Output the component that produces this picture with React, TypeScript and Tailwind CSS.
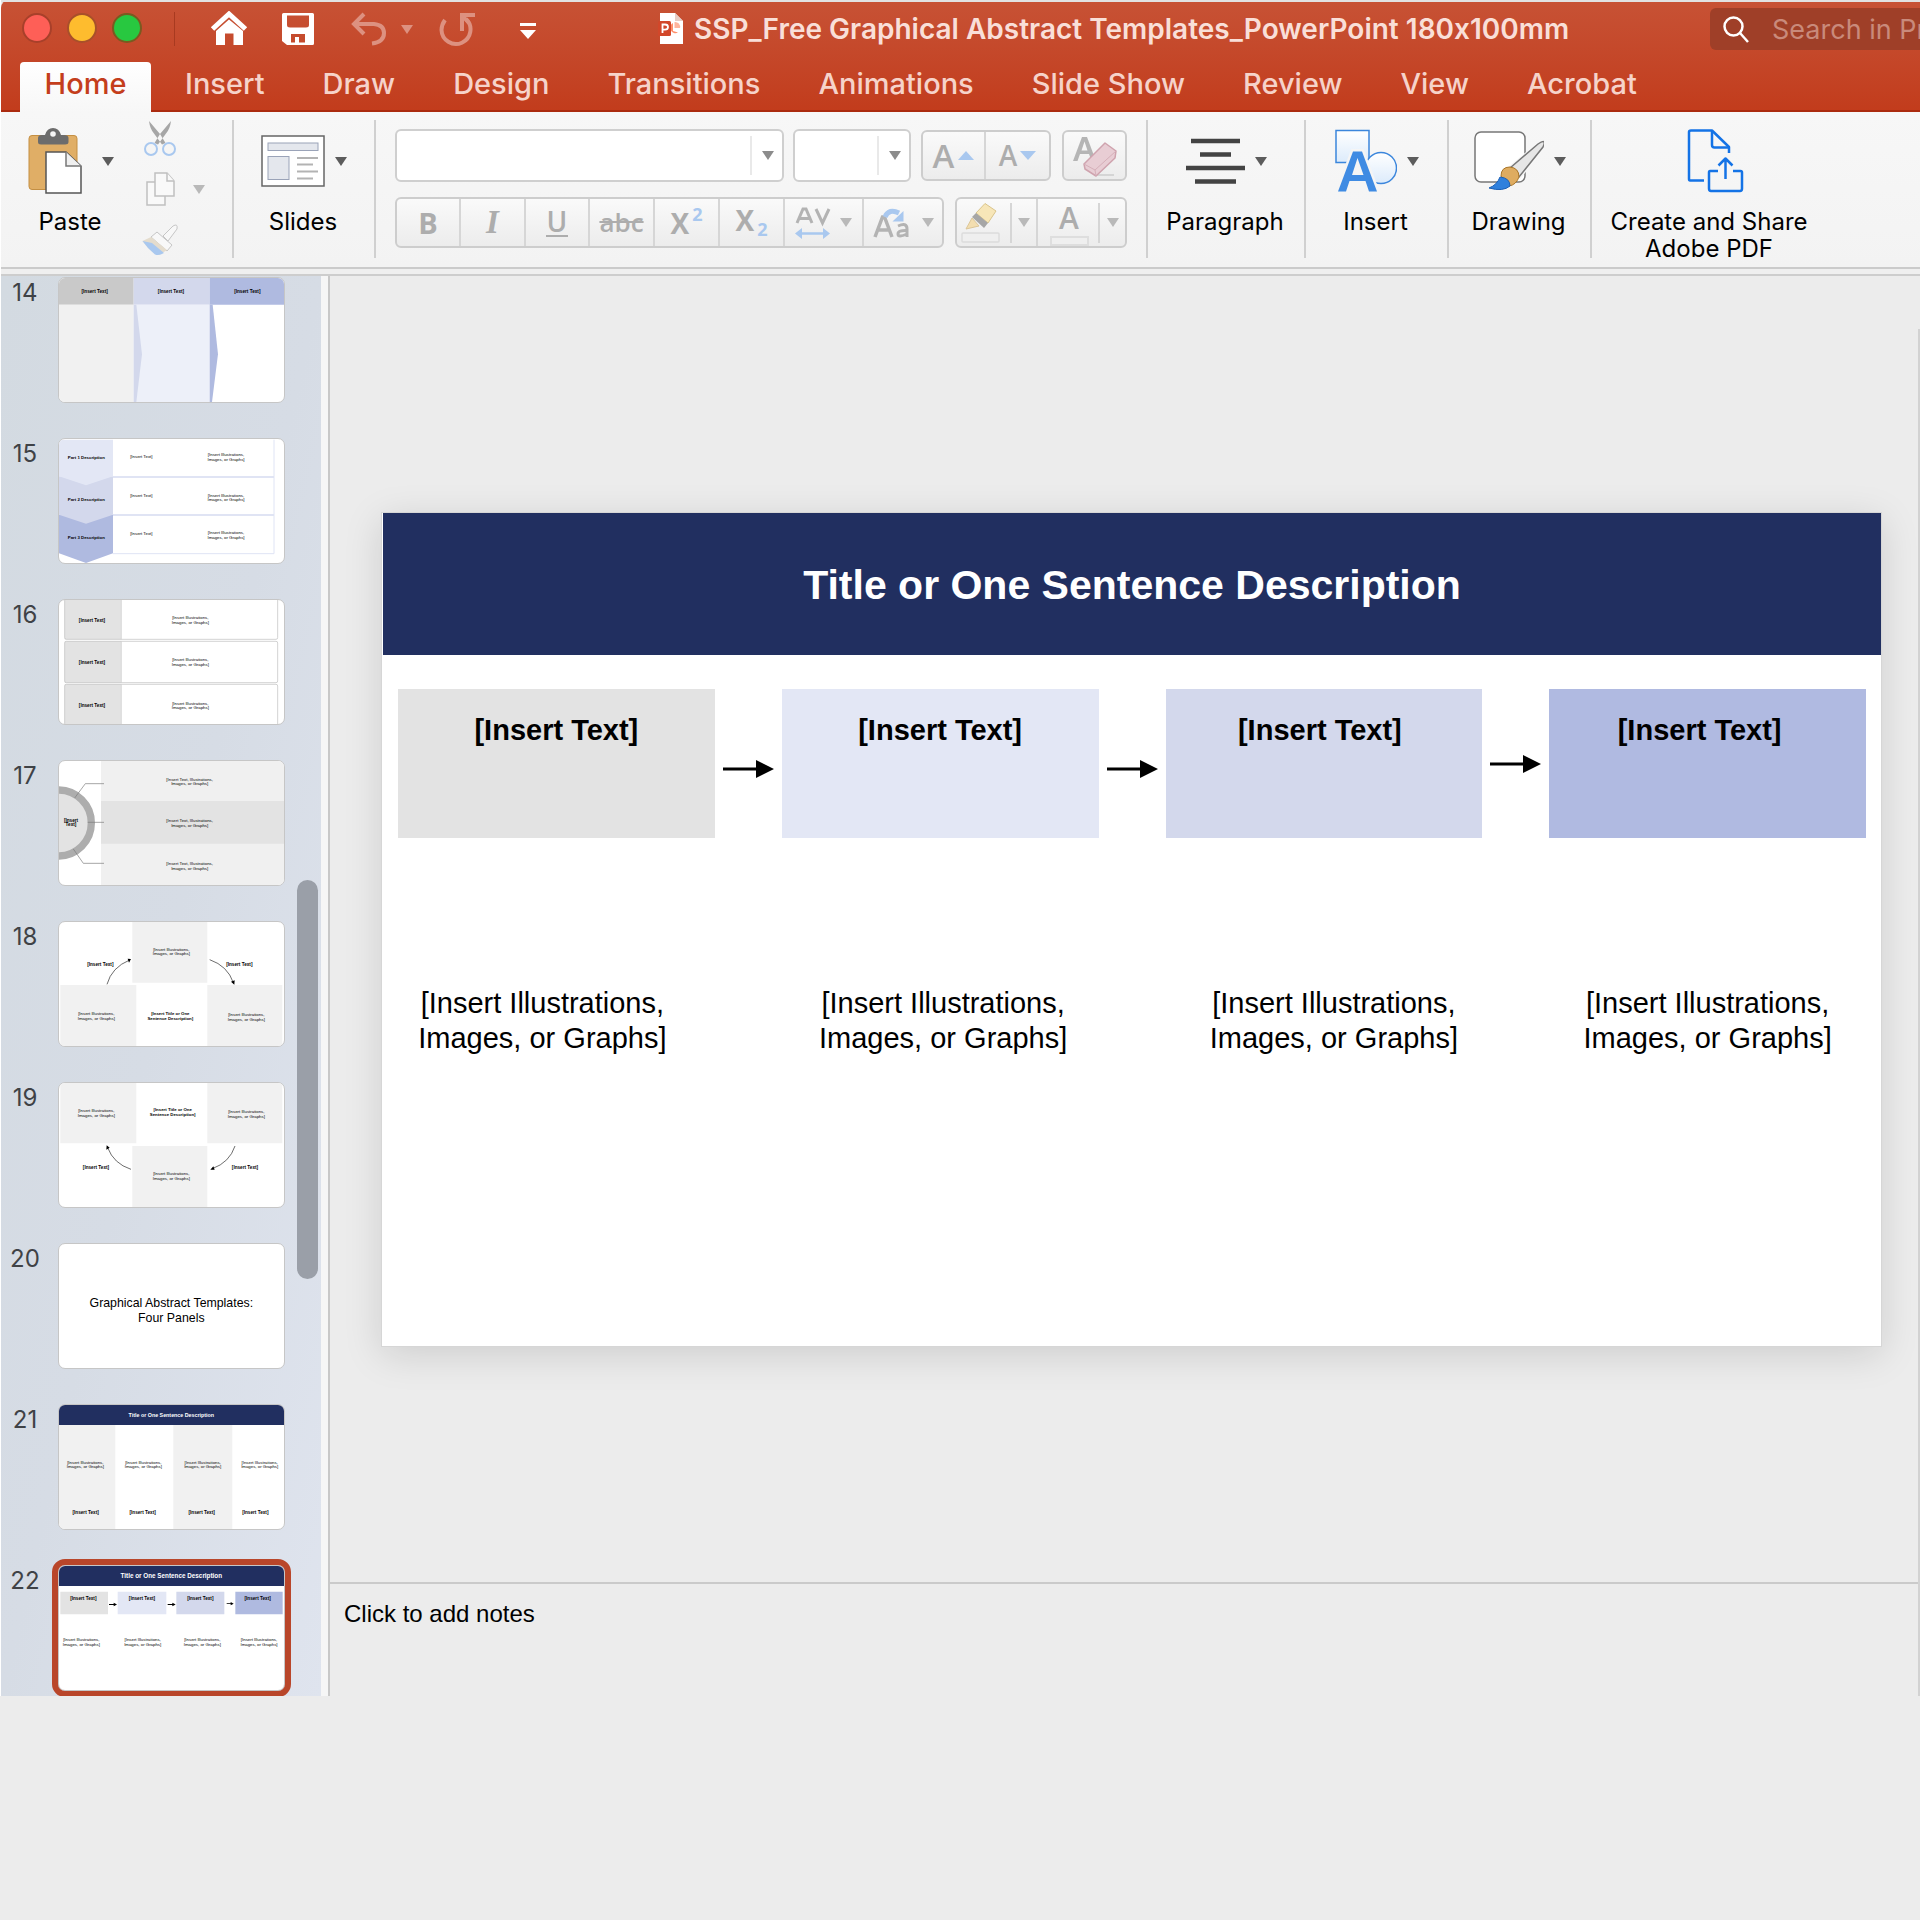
import React from "react";

type Align = { children?: React.ReactNode };

/* ---------- small shared pieces ---------- */

function Caret({ tone = "#5c5c5c" }: { tone?: string }) {
  return (
    <svg width="12" height="9" viewBox="0 0 12 9" aria-hidden="true" className="shrink-0">
      <path d="M0 0H12L6 9Z" fill={tone} />
    </svg>
  );
}

function Separator() {
  return <div className="mt-[8px] h-[138px] w-[2px] shrink-0 bg-[#d0d0d0]" />;
}

/* ---------- title bar ---------- */

function TitleBar() {
  return (
    <div className="flex h-[60px] items-start">
      <div className="flex w-[657px] shrink-0 items-start">
        <div className="flex gap-[15px] pt-[11px] pl-[21px]">
          <button aria-label="Close" className="size-[30px] rounded-full border-2 border-[#a8402a] bg-[#fe5f57]" />
          <button aria-label="Minimize" className="size-[30px] rounded-full border-2 border-[#a8502a] bg-[#febc2e]" />
          <button aria-label="Zoom" className="size-[30px] rounded-full border-2 border-[#7a5a20] bg-[#28c840]" />
        </div>
        <div className="mt-[10px] ml-[32px] h-[34px] w-px bg-[#a83a20]" />
        <button aria-label="Home" className="mt-[9px] ml-[35px]">
          <svg width="38" height="36" viewBox="210 11 38 36">
            <path d="M212.500 29L229 14L245.500 29" fill="none" stroke="#fff" strokeWidth="5" />
            <path d="M216 31L229 19.500L243 31V45H233.500V33.500H225V45H216Z" fill="#fff" />
          </svg>
        </button>
        <button aria-label="Save" className="mt-[11px] ml-[34px]">
          <svg width="32" height="33" viewBox="282 13 32 33">
            <path fillRule="evenodd" fill="#fff" d="M283.500 13H312.500Q314 13 314 14.500V43.500Q314 45 312.500 45H287L282 41V14.500Q282 13 283.500 13ZM287 15.500V25Q287 27.500 290 27.500H306Q309 27.500 309 25V15.500ZM291 34V42.500H295V37H299V42.500H305V34Z" />
          </svg>
        </button>
        <button aria-label="Undo" className="mt-[10px] ml-[37px]">
          <svg width="36" height="34" viewBox="351 12 36 34" fill="none" stroke="#dd9180" strokeWidth="4">
            <path d="M364 14L354 24L364 34" />
            <path d="M355 24H374Q384 25 384 33Q384 42 372 43.500" />
          </svg>
        </button>
        <button aria-label="Undo history" className="mt-[23px] ml-[14px]">
          <Caret tone="#dd9180" />
        </button>
        <button aria-label="Redo" className="mt-[10px] ml-[26px]">
          <svg width="37" height="35" viewBox="439 12 37 35" fill="none" stroke="#dd9180" strokeWidth="4">
            <path d="M445 20Q441.500 25 441.500 30A14.500 14.500 0 1 0 466 19" />
            <path d="M475 15H462V31" />
            <path d="M462.500 16L469 23" />
          </svg>
        </button>
        <button aria-label="Customize toolbar" className="mt-[21px] ml-[44px]">
          <svg width="16" height="16" viewBox="0 0 16 16" fill="#fff">
            <path d="M0 0H16V3H0ZM0 7H16L8 16Z" />
          </svg>
        </button>
      </div>
      <div className="flex min-w-0 flex-1 gap-[10px] pt-[10px]">
        <svg width="26" height="33" viewBox="658 11 26 33" className="shrink-0">
          <path d="M660 12H675L683 20V43H660Z" fill="#fff" />
          <path d="M675 12V20H683Z" fill="#e6cdc5" />
          <path d="M673 22A5 5 0 1 0 678 31.500L673 30Z" fill="#ff8f6b" />
          <path d="M674.500 21A5 5 0 0 1 680 27H674.500Z" fill="#ffb59d" />
          <rect x="658" y="20" width="13" height="15" rx="1.500" fill="#d2472a" />
          <path d="M662.500 32V23.500H665Q668 23.500 668 26Q668 28.700 665 28.700H662.500" fill="none" stroke="#fff" strokeWidth="1.800" />
        </svg>
        <h1 className="whitespace-nowrap text-[28px] leading-[34px] font-semibold text-[#f9dfd8]">
          SSP_Free Graphical Abstract Templates_PowerPoint 180x100mm
        </h1>
      </div>
      <label className="mt-[6px] flex h-[42px] w-[210px] shrink-0 items-center gap-[23px] overflow-hidden rounded-l-[6px] bg-[#9f3f28] pl-[13px]">
        <svg width="26" height="27" viewBox="0 0 26 27" fill="none" stroke="#fff" strokeWidth="2.500" className="shrink-0">
          <circle cx="10.500" cy="10.500" r="9" />
          <path d="M17 17L25 26" />
        </svg>
        <input
          aria-label="Search in Presentation"
          placeholder="Search in Presentation"
          className="w-[300px] shrink-0 bg-transparent pt-[2px] text-[27px] outline-none placeholder:text-[#c98a7b]"
        />
      </label>
    </div>
  );
}

const tabs = ["Insert", "Draw", "Design", "Transitions", "Animations", "Slide Show", "Review", "View", "Acrobat"];

function TabBar() {
  return (
    <nav className="flex h-[50px] items-stretch pl-[19px] text-[29px] leading-[44px] font-medium">
      <button className="mr-[34px] w-[131px] shrink-0 rounded-t-[4px] bg-gradient-to-b from-white to-[#f7f7f7] pb-[6px] text-[#c43e1c]">
        Home
      </button>
      <div className="flex gap-[58px] text-[#f6d3ca]">
        {tabs.map((t) => (
          <button key={t} className="pb-[6px] whitespace-nowrap">
            {t}
          </button>
        ))}
      </div>
    </nav>
  );
}

/* ---------- ribbon ---------- */

function BigButton({ label, icon, caret = true }: { label: React.ReactNode; icon: React.ReactNode; caret?: boolean }) {
  return (
    <button className="flex flex-col items-center pt-[15px] text-[24px] leading-[27px] text-black">
      <span className="flex h-[68px] items-center gap-[10px]">
        {icon}
        {caret && <Caret />}
      </span>
      <span className={caret ? "mt-[13px] pr-[2px] whitespace-nowrap" : "mt-[13px] whitespace-nowrap"}>{label}</span>
    </button>
  );
}

const pasteIcon = (
  <svg width="64" height="66" viewBox="28 127 64 66">
    <rect x="29" y="134.500" width="48" height="54" rx="3" fill="#e0ae66" stroke="#c48f43" />
    <path d="M38 141V137Q38 134 42 134H45Q47 127 53 127T61 134H64Q68.500 134 68.500 137V141Q68.500 143.500 65 143.500H41Q38 143.500 38 141Z" fill="#6c6c6c" />
    <circle cx="53" cy="133" r="2.800" fill="#f5f5f5" />
    <path d="M46 151H66L81 165V192H46Z" fill="#fff" stroke="#555" strokeWidth="1.500" />
    <path d="M66 151V165H81" fill="#f0f0f0" stroke="#777" strokeWidth="1.500" />
  </svg>
);

const slidesIcon = (
  <svg width="64" height="52" viewBox="262 136 64 52">
    <rect x="263" y="137" width="62" height="50" fill="#fff" stroke="#666" strokeWidth="1.500" />
    <rect x="269" y="144" width="50" height="7.500" fill="#e4e7ed" stroke="#9aa3b8" />
    <rect x="269" y="157.500" width="21" height="23" fill="#e4e7ed" stroke="#9aa3b8" />
    <path d="M298 159H319M298 165.500H314M298 172.500H319M298 179.500H314" stroke="#b3b3b3" strokeWidth="2" />
  </svg>
);

const paragraphIcon = (
  <svg width="60" height="48" viewBox="1184 138 60 48">
    <path d="M1190 142H1239M1199 155.500H1230M1185 169H1244M1194 182.500H1235" stroke="#434343" strokeWidth="4.500" />
  </svg>
);

const insertIcon = (
  <svg width="62" height="64" viewBox="1335 131 62 64">
    <defs>
      <linearGradient id="ins" x1="0" y1="0" x2="0" y2="1">
        <stop offset="0" stopColor="#fff" />
        <stop offset="1" stopColor="#dcebfb" />
      </linearGradient>
    </defs>
    <rect x="1336" y="132.500" width="33" height="32" fill="url(#ins)" stroke="#3b86dc" strokeWidth="1.500" />
    <circle cx="1381" cy="170" r="15.500" fill="url(#ins)" stroke="#3b86dc" strokeWidth="1.500" />
    <path d="M1338 193.500L1353 153.500H1362L1377 193.500H1369L1365.500 183H1349.500L1346 193.500ZM1352 177H1363.500L1357.500 160Z" fill="#3f8be3" stroke="#f5f5f5" strokeWidth="5" paintOrder="stroke" />
  </svg>
);

const drawingIcon = (
  <svg width="70" height="62" viewBox="1474 135 70 62">
    <rect x="1475" y="137" width="50" height="50" rx="6" fill="#fff" stroke="#777" strokeWidth="1.500" />
    <path d="M1511 172L1539 149Q1545 145 1543 152L1520 181Z" fill="#e9e9e9" stroke="#f7f7f7" strokeWidth="4" />
    <path d="M1510 173L1538 149Q1547 143 1543 152L1519 182Z" fill="#e6e6e6" stroke="#777" strokeWidth="1.500" />
    <path d="M1501 181Q1501 172 1510 172Q1519 173 1519 182Q1516 190 1509 191Z" fill="#dfac60" stroke="#a97527" />
    <path d="M1500 182Q1510 183 1510 191Q1503 197 1489 193Q1497 190 1500 182Z" fill="#2f80dd" stroke="#1c5fb4" />
  </svg>
);

const pdfIcon = (
  <svg width="72" height="64" viewBox="1673 135 72 64" fill="none" stroke="#1473e6" strokeWidth="2.500" strokeLinejoin="round">
    <path d="M1704 186.500H1690Q1689 186.500 1689 185V138Q1689 136.500 1691 136.500H1712L1729 153V159" />
    <path d="M1712 137V151Q1712 153.500 1714.500 153.500H1729" />
    <path d="M1718 177H1710Q1709 177 1709 178.500V194.500Q1709 197 1711 197H1740Q1742 197 1742 194.500V178.500Q1742 177 1740.500 177H1733" />
    <path d="M1725.500 185V165M1718.500 171.500L1725.500 164.500L1732.500 171.500" />
  </svg>
);

function ClipboardTools() {
  return (
    <div className="flex flex-col items-start pt-[8px]">
      <button aria-label="Cut" className="ml-[2px] h-[36px]">
        <svg width="33" height="36" viewBox="144 120 33 36">
          <path d="M149 121Q150 129 154 133.500L162 144.500L165.500 143L160 134ZM171 121Q170 129 166 133.500L158 144.500L154.500 143L160 134Z" fill="#a6a6a6" />
          <circle cx="151" cy="149" r="6" fill="#f5f5f5" stroke="#a9c8ef" strokeWidth="2" />
          <circle cx="169" cy="149" r="6" fill="#f5f5f5" stroke="#a9c8ef" strokeWidth="2" />
        </svg>
      </button>
      <button aria-label="Copy" className="mt-[16px] ml-[4px] flex h-[34px] items-center gap-[18px]">
        <svg width="29" height="34" viewBox="146 172 29 34" fill="#f9f9f9" stroke="#c0c0c0" strokeWidth="1.500">
          <path d="M147 182H165V205H147Z" />
          <path d="M155 173H167L174 181V196H155Z" />
          <path d="M167 173V181H174" />
        </svg>
        <Caret tone="#b9b9b9" />
      </button>
      <button aria-label="Format painter" className="mt-[18px] h-[32px]">
        <svg width="37" height="32" viewBox="142 224 37 32" stroke="#c6c6c6">
          <path d="M163 236L173 226Q178 223 177 229L168 241Z" fill="#f8f8f8" />
          <path d="M157 232L172 245L167 251L151 237Z" fill="#f8f8f8" />
          <path d="M151 237L167 250L159 255Q152 254 142.500 241Z" fill="#e4dccd" stroke="none" />
          <path d="M142.500 241L152 243L164 253Q159 256 155 254.500Q148 249 142.500 241Z" fill="#a9c8ef" stroke="none" />
        </svg>
      </button>
    </div>
  );
}

function Combo({ label, className }: { label: string; className: string }) {
  return (
    <label className={`relative flex h-[53px] shrink-0 items-center ${className}`}>
      <select
        aria-label={label}
        className="size-full appearance-none rounded-[6px] border-2 border-[#cfcfcf] bg-white outline-none"
      />
      <span className="pointer-events-none absolute right-0 flex h-[39px] w-[34px] items-center justify-center border-l-2 border-[#e9e9e9]">
        <Caret tone="#8c8c8c" />
      </span>
    </label>
  );
}

function Group({ children }: Align) {
  return (
    <div className="flex h-[51px] shrink-0 divide-x-2 divide-[#d6d6d6] overflow-hidden rounded-[6px] border-2 border-[#cdcdcd] bg-gradient-to-b from-[#fafafa] to-[#ececec] text-[#adadad]">
      {children}
    </div>
  );
}

function Tool({ label, className, children }: { label: string; className: string; children: React.ReactNode }) {
  return (
    <button aria-label={label} className={`flex shrink-0 items-center justify-center ${className}`}>
      {children}
    </button>
  );
}

function FontGroup() {
  return (
    <div className="flex shrink-0 flex-col gap-[15px] px-[19px] pt-[17px]">
      <div className="flex items-center">
        <Combo label="Font" className="w-[389px]" />
        <Combo label="Font size" className="ml-[9px] w-[118px]" />
        <div className="ml-[10px] font-['Open_Sans',sans-serif] font-semibold">
          <Group>
            <Tool label="Increase font size" className="w-[63px] gap-[4px] text-[33px] leading-[47px]">
              A
              <svg width="16" height="9" viewBox="0 0 16 9" className="shrink-0"><path d="M0 9L8 0L16 9Z" fill="#a9c8ef" /></svg>
            </Tool>
            <Tool label="Decrease font size" className="w-[63px] gap-[3px] text-[28px] leading-[47px]">
              A
              <svg width="16" height="9" viewBox="0 0 16 9" className="shrink-0"><path d="M0 0L8 9L16 0Z" fill="#a9c8ef" /></svg>
            </Tool>
          </Group>
        </div>
        <div className="ml-[11px]">
          <Group>
            <Tool label="Clear formatting" className="w-[61px]">
              <svg width="46" height="44" viewBox="1072 133 46 44">
                <path d="M1073 160L1082 136H1087L1096 160H1091.500L1089 153H1080L1077.500 160ZM1081.500 149.500H1087.500L1084.500 140.500Z" fill="#b5b5b5" />
                <path d="M1096 174H1114" stroke="#d5d5d5" strokeWidth="2" />
                <path d="M1084 163L1105 142L1116 150L1115 157L1096 175L1085 168Z" fill="#e8cdd4" stroke="#cfa3ae" strokeWidth="1.500" strokeLinejoin="round" />
                <path d="M1084 163L1095 169L1096 175M1095 169L1116 150" fill="none" stroke="#d5afb9" />
              </svg>
            </Tool>
          </Group>
        </div>
      </div>
      <div className="flex gap-[11px] font-['Open_Sans',sans-serif]">
        <Group>
          <Tool label="Bold" className="w-[64px] text-[29px] font-bold">B</Tool>
          <Tool label="Italic" className="w-[65px] font-['Liberation_Serif',serif] text-[33px] font-bold italic">I</Tool>
          <Tool label="Underline" className="w-[64px] text-[28px] font-semibold">
            <span className="border-b-2 border-[#adadad] px-px leading-[27px]">U</span>
          </Tool>
          <Tool label="Strikethrough" className="w-[65px] text-[26px] font-semibold line-through">abc</Tool>
          <Tool label="Superscript" className="w-[65px] text-[28px] font-bold">
            X<span className="ml-[3px] pb-[16px] text-[18px] text-[#a9c8ef]">2</span>
          </Tool>
          <Tool label="Subscript" className="w-[65px] text-[28px] font-bold">
            <span className="pb-[6px]">X</span><span className="ml-[3px] pt-[14px] text-[18px] text-[#a9c8ef]">2</span>
          </Tool>
          <Tool label="Character spacing" className="w-[79px] gap-[9px]">
            <svg width="36" height="32" viewBox="798 206 36 32">
              <path d="M800 222L806 208H809L815 222M802.500 217.500H812.500M819 208L825.500 222L832 208" fill="none" stroke="#b3b3b3" strokeWidth="3" />
              <path d="M803 232.500H829" stroke="#a9c8ef" strokeWidth="2.500" />
              <path d="M798 232.500L805 227V238ZM833 232.500L826 227V238Z" fill="#a9c8ef" />
            </svg>
            <Caret tone="#b9b9b9" />
          </Tool>
          <Tool label="Change case" className="w-[78px] gap-[13px]">
            <svg width="36" height="34" viewBox="876 205 36 34">
              <path d="M878 236L885.500 216H887.500L895 236M880.500 229H892" fill="none" stroke="#b3b3b3" strokeWidth="3.500" />
              <path d="M901 225Q910 221 910 228V236M910 229.500Q901 229 901 233T910 233" fill="none" stroke="#b3b3b3" strokeWidth="3" />
              <path d="M888 216Q892 207 902 212" fill="none" stroke="#a9c8ef" strokeWidth="5" />
              <path d="M906.500 210V220.500H895.500Z" fill="#a9c8ef" />
            </svg>
            <Caret tone="#b9b9b9" />
          </Tool>
        </Group>
        <Group>
          <Tool label="Highlight color" className="w-[81px]">
            <svg width="48" height="47" viewBox="957 199 48 47">
              <path d="M976 213L985 203.500L996 211L988 223Z" fill="#f7e6b8" stroke="#d9c48b" strokeLinejoin="round" />
              <path d="M976 213L988 223L984 228L972 217Z" fill="#a6a6a6" />
              <path d="M972 218L979 226L966 229Z" fill="#f3deb0" stroke="#dcc698" />
              <rect x="962" y="233" width="37" height="9" rx="1" fill="#efefef" stroke="#dcdcdc" strokeWidth="1.500" />
            </svg>
            <span className="ml-[5px] flex h-[40px] flex-1 items-center justify-center border-l-2 border-[#d6d6d6]">
              <Caret tone="#b9b9b9" />
            </span>
          </Tool>
          <Tool label="Font color" className="w-[87px]">
            <span className="ml-[10px] flex h-full w-[42px] flex-col items-center text-[30px] leading-[37px] font-semibold">
              A
              <span className="h-[10px] w-[39px] shrink-0 border-2 border-[#dedede] bg-[#efefef]" />
            </span>
            <span className="ml-[8px] flex h-[40px] flex-1 items-center justify-center border-l-2 border-[#d6d6d6]">
              <Caret tone="#b9b9b9" />
            </span>
          </Tool>
        </Group>
      </div>
    </div>
  );
}

function Ribbon() {
  return (
    <section className="flex h-[157px] items-start overflow-hidden border-b-2 border-[#cbcbcb] bg-gradient-to-b from-[#f7f7f7] to-[#f3f3f3]">
      <div className="flex w-[231px] shrink-0">
        <div className="pl-[27px]">
          <BigButton label="Paste" icon={pasteIcon} />
        </div>
        <div className="pl-[28px]">
          <ClipboardTools />
        </div>
      </div>
      <Separator />
      <div className="flex w-[140px] shrink-0 justify-center">
        <BigButton label="Slides" icon={slidesIcon} />
      </div>
      <Separator />
      <FontGroup />
      <Separator />
      <div className="flex w-[156px] shrink-0 justify-center">
        <BigButton label="Paragraph" icon={paragraphIcon} />
      </div>
      <Separator />
      <div className="flex w-[141px] shrink-0 justify-center">
        <BigButton label="Insert" icon={insertIcon} />
      </div>
      <Separator />
      <div className="flex w-[141px] shrink-0 justify-center">
        <BigButton label="Drawing" icon={drawingIcon} />
      </div>
      <Separator />
      <div className="flex w-[234px] shrink-0 justify-center">
        <BigButton caret={false} label={<>Create and Share<br />Adobe PDF</>} icon={pdfIcon} />
      </div>
    </section>
  );
}

/* ---------- thumbnails ---------- */

type LinesProps = { x: number; y: number; lines: string[]; bold?: boolean; size?: number; gap?: number; fill?: string };

function Lines({ x, y, lines, bold, size, gap = 14, fill = "#000" }: LinesProps) {
  return (
    <text textAnchor="middle" fontSize={size ?? (bold ? 14 : 13)} fontWeight={bold ? 700 : 400} fill={fill}>
      {lines.map((l, i) => (
        <tspan key={i} x={x} y={y + i * gap}>{l}</tspan>
      ))}
    </text>
  );
}

const INS = ["[Insert Text]"];
const ILL = ["[Insert Illustrations,", "Images, or Graphs]"];
const TITLE = "Title or One Sentence Description";

function Thumb14() {
  return (
    <>
      <path d="M0 0H224V80H0Z" fill="#c9c9c9" />
      <path d="M0 80H224V372H0Z" fill="#f1f1f1" />
      <path d="M224 0H452V80H224Z" fill="#d3d8ec" />
      <path d="M224 80H452V372H224Z" fill="#edf0f9" />
      <path d="M452 0H675V80H452Z" fill="#afbae0" />
      <path d="M224 80H232L249 229L232 372H224Z" fill="#d3d8ec" />
      <path d="M452 80H461L477 229L459 372H452Z" fill="#afbae0" />
      {[107, 336, 565].map((x) => <Lines key={x} x={x} y={44} lines={INS} bold />)}
    </>
  );
}

function Thumb15() {
  return (
    <>
      <path d="M0 343V227H162V343L81 372Z" fill="#afbae0" />
      <path d="M0 227V112H162V227L81 254Z" fill="#d3d8ec" />
      <path d="M0 112V2H162V112L81 139Z" fill="#e3e7f5" />
      <path d="M162 114H645M162 228H645" stroke="#d6dcf1" strokeWidth="5" />
      <path d="M162 344H645V2" stroke="#dfe4f5" strokeWidth="3" fill="none" />
      {[0, 1, 2].map((i) => (
        <React.Fragment key={i}>
          <Lines x={82} y={[59, 186, 299][i]} lines={[`Part ${i + 1} Description`]} bold size={13} />
          <Lines x={247} y={[57, 173, 288][i]} lines={INS} />
          <Lines x={501} y={[52, 173, 285][i]} lines={ILL} />
        </React.Fragment>
      ))}
    </>
  );
}

function Thumb16() {
  return (
    <>
      {[[-10, 128], [124, 124], [253, 135]].map(([y, h], i) => (
        <React.Fragment key={i}>
          <rect x="17" y={y} width="170" height={h} fill="#e3e3e3" />
          <rect x="17" y={y} width="639" height={h} rx="5" fill="none" stroke="#bdbdbd" strokeWidth="2" />
          <path d={`M187 ${y}v${h}`} stroke="#cfcfcf" strokeWidth="2" />
          <Lines x={99} y={[66, 192, 322][i]} lines={INS} bold />
          <Lines x={394} y={[58, 184, 314][i]} lines={ILL} />
        </React.Fragment>
      ))}
    </>
  );
}

function Thumb17() {
  return (
    <>
      <path d="M126 0H675V372H126Z" fill="#f0f0f0" />
      <path d="M126 120H675V248H126Z" fill="#e3e3e3" />
      <circle cx="-2" cy="186" r="99" fill="#e3e3e3" stroke="#adadad" strokeWidth="22" />
      <path d="M47 111L79 68H135M86 184H135M43 264L73 307H135" fill="none" stroke="#7a7a7a" strokeWidth="2" />
      <Lines x={36} y={182} lines={["[Insert", "Text]"]} bold />
      {[59, 184, 312].map((y) => (
        <Lines key={y} x={392} y={y} lines={["[Insert Text, Illustrations,", "Images, or Graphs]"]} />
      ))}
    </>
  );
}

function Thumb18() {
  return (
    <>
      <path d="M220 0H445V182H220ZM4 189H232V372H4ZM445 189H670V372H445Z" fill="#f1f1f1" />
      <g fill="none" stroke="#222" strokeWidth="2">
        <path d="M144 187Q158 136 212 114" />
        <path d="M452 113Q506 132 523 182" />
      </g>
      <path d="M216 111L206 110L210 122ZM526 188L516 179L527 175Z" fill="#000" />
      <Lines x={337} y={86} lines={ILL} />
      <Lines x={124} y={133} lines={INS} bold />
      <Lines x={541} y={133} lines={INS} bold />
      <Lines x={112} y={280} lines={ILL} />
      <Lines x={334} y={280} lines={["[Insert Title or One", "Sentence Description]"]} bold size={13} />
      <Lines x={562} y={282} lines={ILL} />
    </>
  );
}

function Thumb19() {
  return (
    <>
      <path d="M4 0H232V181H4ZM445 0H670V181H445ZM220 189H445V372H220Z" fill="#f1f1f1" />
      <g fill="none" stroke="#222" strokeWidth="2">
        <path d="M216 259Q164 242 146 194" />
        <path d="M528 189Q512 238 460 257" />
      </g>
      <path d="M143 187L142 200L152 194ZM454 260L463 250L467 260Z" fill="#000" />
      <Lines x={112} y={88} lines={ILL} />
      <Lines x={341} y={84} lines={["[Insert Title or One", "Sentence Description]"]} bold size={13} />
      <Lines x={562} y={91} lines={ILL} />
      <Lines x={337} y={277} lines={ILL} />
      <Lines x={111} y={257} lines={INS} bold />
      <Lines x={558} y={257} lines={INS} bold />
    </>
  );
}

function Thumb20() {
  return <Lines x={337} y={188} gap={45} size={37} lines={["Graphical Abstract Templates:", "Four Panels"]} />;
}

function Thumb21() {
  return (
    <>
      <path d="M0 0H675V60H0Z" fill="#212f60" />
      <path d="M0 60H169V372H0ZM343 60H520V372H343Z" fill="#f1f1f1" />
      <Lines x={337} y={35} lines={[TITLE]} bold size={16} fill="#fff" />
      {[79, 253, 431, 602].map((x) => <Lines key={x} x={x} y={176} lines={ILL} />)}
      {[80, 251, 428, 589].map((x) => <Lines key={x} x={x} y={326} lines={INS} bold />)}
    </>
  );
}

function Thumb22() {
  return (
    <>
      <path d="M0 0H675V60H0Z" fill="#212f60" />
      <Lines x={337} y={35} lines={[TITLE]} bold size={19} fill="#fff" />
      <path d="M4 77H147V145H4Z" fill="#e3e3e3" />
      <path d="M176 77H322V145H176Z" fill="#e3e7f5" />
      <path d="M352 77H496V145H352Z" fill="#d3d8ec" />
      <path d="M529 77H671V145H529Z" fill="#afbae0" />
      <path d="M150 114H164V110L174 115.500L164 121V117H150ZM326 114H340V110L350 115.500L340 121V117H326ZM503 112H515V108L524 113L515 118V114H503Z" />
      {[73, 249, 424, 596].map((x) => <Lines key={x} x={x} y={103} lines={INS} bold />)}
      {[67, 251, 430, 600].map((x) => <Lines key={x} x={x} y={225} lines={ILL} />)}
    </>
  );
}

const thumbs: [number, () => React.JSX.Element][] = [
  [14, Thumb14], [15, Thumb15], [16, Thumb16], [17, Thumb17], [18, Thumb18],
  [19, Thumb19], [20, Thumb20], [21, Thumb21], [22, Thumb22],
];

function SlidePanel() {
  return (
    <aside className="relative flex h-[1420px] w-[329px] shrink-0 overflow-hidden border-r-2 border-[#c8c8c8] bg-[#f6f6f6]">
      <ol className="flex w-[320px] flex-col gap-[35px] bg-gradient-to-br from-[#d3dae1] via-[#d6dce5] to-[#dfe4ee] pt-px">
        {thumbs.map(([n, Draw]) => (
          <li key={n} className="flex items-start">
            <span className="w-[48px] shrink-0 text-center text-[24px] leading-[32px] text-[#3f4246]">{n}</span>
            <button
              aria-label={`Slide ${n}`}
              className={
                "ml-[9px] h-[126px] w-[227px] shrink-0 overflow-hidden rounded-[7px] border border-[#c6c6c6] bg-white " +
                (n === 22 ? "outline-[6px] outline-[#b9462a]" : "")
              }
            >
              <svg viewBox="0 0 675 372" className="block size-full font-['Liberation_Sans',Arial,sans-serif]">
                <Draw />
              </svg>
            </button>
          </li>
        ))}
      </ol>
      <div className="absolute top-[604px] left-[296px] h-[399px] w-[21px] rounded-full bg-[#9a9fa8]" />
    </aside>
  );
}

/* ---------- slide canvas ---------- */

function Arrow({ className }: { className: string }) {
  return (
    <svg width="51" height="18" viewBox="0 0 51 18" className={`shrink-0 ${className}`} aria-hidden="true">
      <path d="M0 7.500H33V0L51 9L33 18V10.500H0Z" />
    </svg>
  );
}

function Box({ fill, align = "" }: { fill: string; align?: string }) {
  return (
    <div className={`h-[149px] min-w-0 flex-1 pt-[24px] text-center text-[29px] leading-[34px] font-bold ${fill}`}>
      <p className={align}>[Insert Text]</p>
    </div>
  );
}

function Caption({ align = "" }: { align?: string }) {
  return (
    <div className="min-w-0 flex-1 text-center text-[29px] leading-[35px]">
      <p className={align}>
        [Insert Illustrations,
        <br />
        Images, or Graphs]
      </p>
    </div>
  );
}

function Slide() {
  return (
    <article className="mr-[36px] ml-[51px] h-[835px] border border-[#d6d6d6] bg-white font-['Liberation_Sans',Arial,sans-serif] text-black shadow-[0_8px_36px_rgba(0,0,0,0.13)]">
      <h2 className="ml-px bg-[#212f60] pt-[2px] text-center text-[41px] leading-[140px] font-bold text-white">{TITLE}</h2>
      <div className="flex pt-[34px] pr-[15px] pl-[16px]">
        <Box fill="bg-[#e3e3e3]" />
        <Arrow className="mx-[8px] mt-[71px]" />
        <Box fill="bg-[#e3e7f5]" />
        <Arrow className="mx-[8px] mt-[71px]" />
        <Box fill="bg-[#d3d8ec]" align="pr-[8px]" />
        <Arrow className="mx-[8px] mt-[66px]" />
        <Box fill="bg-[#b0bae1]" align="pr-[16px]" />
      </div>
      <div className="flex gap-[67px] pt-[148px] pr-[15px] pl-[16px]">
        <Caption align="pr-[28px]" />
        <Caption align="pl-[6px]" />
        <Caption align="pl-[20px]" />
        <Caption />
      </div>
    </article>
  );
}

export default function App() {
  return (
    <div className="min-h-screen overflow-hidden bg-[#ececec] font-[Inter,sans-serif] [font-feature-settings:'calt'_0]">
      <div className="border-l border-white">
        <header className="rounded-tl-[8px] border-b-2 border-[#ab2b0f] bg-gradient-to-b from-[#c75235] to-[#c23c1c]">
          <div className="h-[2px] bg-[#e2e2e2]" />
          <TitleBar />
          <div className="-mb-[2px]">
            <TabBar />
          </div>
        </header>
        <Ribbon />
        <div className="h-[7px] border-b-2 border-[#cdcdcd] bg-[#efefef]" />
        <div className="flex items-stretch">
          <SlidePanel />
          <main className="flex min-w-0 flex-1 flex-col">
            <div className="flex-1 pt-[236px]">
              <Slide />
            </div>
            <label className="block h-[114px] border-t-2 border-[#cacaca] px-[14px] pt-[12px]">
              <textarea
                aria-label="Notes"
                placeholder="Click to add notes"
                className="block w-full resize-none bg-transparent font-['Liberation_Sans',Arial,sans-serif] text-[24px] leading-[36px] text-black outline-none placeholder:text-black"
                rows={2}
              />
            </label>
          </main>
          <div className="mt-[53px] w-[2px] shrink-0 bg-[#d2d2d2]" />
        </div>
      </div>
    </div>
  );
}
